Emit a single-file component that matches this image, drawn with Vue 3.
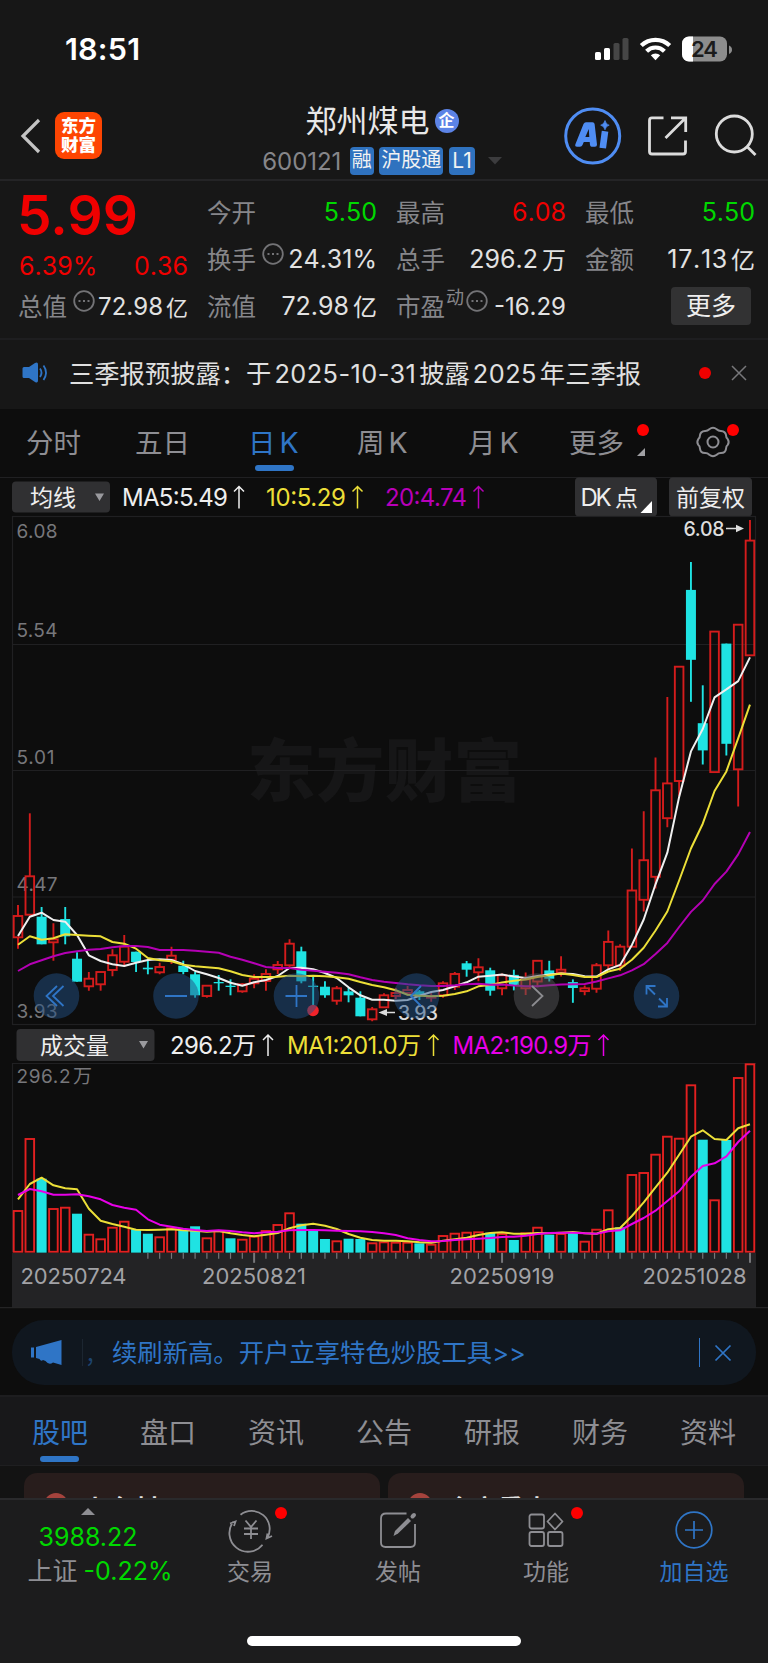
<script setup>
const STEP = 11.806
const X0 = 18
const xs = (i) => +(X0 + STEP * i).toFixed(2)

// Each candle: high, body top, body bottom, low (plot pixels), direction
const early = [
  [315, 348, 412, 446, 1], [40, 229, 344, 344, 1], [321, 350, 433, 433, 0], [370, 418, 427, 482, 1],
  [321, 357, 409, 433, 0], [457, 476, 545, 545, 0], [516, 536, 559, 572, 1], [516, 516, 553, 572, 1],
  [448, 466, 510, 529, 1], [405, 440, 485, 501, 1], [455, 455, 486, 516, 0], [482, 503, 508, 523, 0],
  [488, 501, 517, 523, 1], [440, 467, 479, 492, 1], [482, 497, 516, 523, 0], [516, 523, 586, 593, 0],
  [557, 557, 588, 593, 1], [525, 546, 550, 572, 0], [538, 557, 561, 586, 0], [550, 553, 574, 578, 1],
]
const middle = [
  [223, 236, 250, 265, 1], [208, 222, 243, 272, 1], [183, 195, 208, 222, 1], [118, 131, 196, 203, 1],
  [140, 154, 244, 250, 0], [228, 257, 261, 318, 0], [244, 260, 286, 293, 0], [258, 265, 302, 314, 1],
  [262, 274, 286, 307, 0], [274, 293, 349, 349, 0], [321, 328, 358, 364, 1], [280, 286, 322, 324, 1],
  [264, 279, 288, 298, 1], [258, 270, 279, 288, 1], [270, 274, 286, 300, 0], [278, 288, 293, 305, 1],
  [244, 250, 286, 293, 1], [216, 222, 260, 270, 1], [183, 190, 209, 230, 0], [175, 202, 217, 244, 1],
  [203, 211, 272, 287, 0],
]
const late = [
  [1375, 1380, 1418, 1438, 1], [1364, 1379, 1409, 1424, 0], [1372, 1392, 1418, 1437, 1], [1338, 1338, 1398, 1415, 1],
  [1338, 1366, 1390, 1398, 0], [1325, 1364, 1372, 1384, 1], [1392, 1400, 1417, 1460, 0], [1410, 1418, 1426, 1438, 1],
  [1344, 1351, 1419, 1431, 1], [1250, 1283, 1351, 1365, 1], [1290, 1297, 1352, 1368, 1], [1012, 1134, 1297, 1297, 1],
  [904, 1046, 1161, 1195, 1], [748, 843, 1094, 1128, 1], [572, 823, 924, 950, 1], [484, 484, 816, 860, 1],
  [180, 261, 464, 586, 0], [538, 648, 727, 768, 0], [382, 382, 790, 790, 1], [417, 417, 708, 742, 0],
  [362, 362, 782, 890, 1], [58, 118, 451, 451, 1],
]
const e = (v) => 800 + v / 3
const m = (v) => 900 + v / 3
const l = (v) => 500 + v / 2.9037
const r1 = (n) => +n.toFixed(1)
const scale = (rows, f) => rows.map((r) => [f(r[0]), f(r[1]), f(r[2]), f(r[3]), r[4]])
const candles = [...scale(early, e), ...scale(middle, m), ...scale(late, l)].map((c, i) => ({
  x: xs(i), hi: r1(c[0]), top: r1(c[1]), bot: r1(c[2]), lo: r1(c[3]), up: !!c[4],
}))

const line = (ys) => ys.map((y, i) => `${xs(i)},${r1(y)}`).join(' ')
const join3 = (a, b, c) => line([...a.map(e), ...b.map(m), ...c.map(l)])

const ma5 = join3(
  [408, 350, 338, 360, 365, 405, 466, 483, 493, 498, 488, 480, 478, 480, 493, 513, 523, 534, 548, 557],
  [247, 240, 228, 204, 203, 208, 219, 234, 262, 286, 299, 299, 302, 300, 287, 276, 270, 259, 247, 230, 227],
  [1378, 1384, 1388, 1382, 1378, 1375, 1376, 1383, 1384, 1363, 1350, 1292, 1218, 1116, 1024, 862, 730, 665, 573, 550, 526, 457],
)
const ma10 = join3(
  [434, 409, 419, 415, 403, 405, 407, 409, 426, 431, 446, 474, 481, 484, 494, 499, 502, 505, 514, 525],
  [231, 231, 230, 227, 229, 227, 229, 232, 236, 246, 255, 262, 271, 284, 287, 289, 287, 282, 274, 259, 255],
  [1401, 1396, 1392, 1385, 1380, 1375, 1379, 1385, 1385, 1369, 1361, 1335, 1300, 1250, 1195, 1105, 1012, 940, 845, 788, 692, 594],
)
const ma20 = join3(
  [513, 493, 481, 469, 459, 454, 449, 447, 442, 438, 438, 441, 450, 450, 450, 452, 455, 458, 470, 479],
  [190, 201, 204, 204, 209, 212, 215, 218, 223, 232, 240, 245, 249, 253, 256, 258, 258, 256, 253, 251, 254],
  [1407, 1410, 1412, 1412, 1409, 1407, 1406, 1405, 1398, 1389, 1380, 1366, 1348, 1318, 1286, 1240, 1196, 1163, 1115, 1079, 1029, 964],
)

const volTops = [
  573, 357, 476, 567, 563, 581, 644, 658, 623, 605, 628, 641, 652, 625, 630, 619, 655, 634, 655, 659, 650,
  633, 615, 580, 611, 632, 657, 664, 656, 657, 670, 667, 668, 668, 670, 674, 648, 641, 638, 637, 638, 642,
  660, 640, 623, 644, 642, 639, 665, 629, 571, 622, 465, 459, 404, 350, 356, 196, 359, 541, 360, 174, 133,
]
const volDown = new Set([2, 5, 10, 11, 14, 15, 18, 24, 25, 26, 28, 29, 34, 40, 42, 45, 47, 51, 58, 60])
const v = (n) => 1020 + n / 3
const bars = volTops.map((t, i) => ({ x: xs(i), y: r1(v(t)), up: !volDown.has(i) }))
const volMa1 = line([
  538, 492, 473, 496, 505, 508, 566, 602, 612, 620, 629, 630, 629, 628, 631, 632, 635, 633, 640, 645, 649,
  644, 639, 625, 616, 611, 617, 627, 642, 653, 660, 662, 662, 664, 667, 668, 662, 658, 653, 645, 639, 637,
  641, 641, 639, 640, 638, 636, 640, 641, 628, 624, 588, 547, 502, 458, 404, 350, 331, 357, 360, 325, 313,
].map(v))
const volMa2 = line([
  525, 507, 514, 524, 524, 523, 529, 538, 555, 563, 569, 598, 614, 620, 626, 630, 633, 631, 633, 637, 640,
  637, 635, 631, 630, 630, 631, 632, 633, 634, 636, 640, 645, 655, 660, 664, 663, 660, 658, 656, 654, 651,
  650, 647, 642, 639, 638, 638, 640, 641, 634, 631, 612, 594, 572, 543, 514, 470, 438, 430, 409, 366, 332,
].map(v))
const ticks = Array.from({ length: 52 }, (_, k) => k + 11).map((i) => ({ x: xs(i), h: [20, 41, 62].includes(i) ? 10 : 6 }))

const sections = ['股吧', '盘口', '资讯', '公告', '研报', '财务', '资料']
</script>

<template>
  <div class="page">
    <div class="status">
      <span class="time">18:51</span>
      <svg class="sysicons" width="140" height="30" viewBox="0 0 140 30">
        <rect x="0" y="16" width="6" height="8" rx="1.6" fill="#fff" />
        <rect x="9" y="12" width="6" height="12" rx="1.6" fill="#fff" />
        <rect x="18.500" y="7" width="6" height="17" rx="1.6" fill="#464646" />
        <rect x="27.500" y="2" width="6" height="22" rx="1.6" fill="#464646" />
        <g fill="none" stroke="#fff" stroke-width="4.200">
          <path d="M46.300 9.500 A20.500 20.500 0 0 1 74.700 9.500" />
          <path d="M51.600 15.200 A12.600 12.600 0 0 1 69.400 15.200" />
        </g>
        <path d="M60.500 24.200 L55.800 19.300 A6.800 6.800 0 0 1 65.200 19.300 Z" fill="#fff" />
        <path d="M134 9.500 q3 1.200 3 4.200 q0 3 -3 4.200 z" fill="#8d8d8d" />
        <rect x="87" y="0.500" width="45" height="25" rx="7" fill="#8d8d8d" />
        <path d="M98 0.500 H94 a7 7 0 0 0 -7 7 v11 a7 7 0 0 0 7 7 h4 z" fill="#fff" />
        <text x="109.500" y="21" text-anchor="middle" font-size="22" font-weight="600" fill="#1b1b1b" textLength="27">24</text>
      </svg>
    </div>

    <header class="head">
      <svg class="back" width="22" height="36" viewBox="0 0 22 36"><path d="M19 2 L3 18 L19 34" fill="none" stroke="#c4c4c4" stroke-width="3.200" /></svg>
      <div class="logo"><span>东方</span><span>财富</span></div>
      <div class="title">
        <div class="name"><span>郑州煤电</span><i>企</i></div>
        <div class="code">
          <span class="num">600121</span>
          <b>融</b><b>沪股通</b><b class="lv">L1</b>
          <svg width="14" height="8" viewBox="0 0 14 8"><path d="M0 0h14l-7 7.500z" fill="#3c3c3e" /></svg>
        </div>
      </div>
      <svg class="tools" width="204" height="60" viewBox="0 0 204 60">
        <g transform="translate(-556 -106)">
          <circle cx="592.700" cy="136" r="27" fill="none" stroke="#4f8df3" stroke-width="3" />
          <path fill="#4f8df3" fill-rule="evenodd" d="M575.300 144.500L583.500 124Q584.300 122.300 586 122.300H592.500Q594.300 122.300 594.600 124L597 144.500Q597 146.700 595 146.700H591.500Q590.300 146.700 590 145L589.700 142H583.800L582.500 145Q581.800 146.700 580 146.700H577Q574.800 146.700 575.300 144.500ZM585.300 137H589.300L588.800 129Z" />
          <path d="M604.600 134.500L603.200 144.800" fill="none" stroke="#4f8df3" stroke-width="6.600" stroke-linecap="square" />
          <path d="M605 120.500 q1 4 4.200 4.700 q-3.400 0.800 -4.200 4.600 q-0.900 -3.800 -4.300 -4.600 q3.300 -0.800 4.300 -4.700z" fill="#4f8df3" stroke="#4f8df3" stroke-width="0.700" />
          <g fill="none" stroke="#dcdcdc" stroke-width="2.800">
            <path d="M663.500 117.800 H652 q-2.500 0 -2.500 2.500 V151.500 q0 2.500 2.500 2.500 H683 q2.500 0 2.500 -2.500 V140.500" />
            <path d="M671 117.800 H685.700 V132 M685 118.500 L665.500 138" />
            <circle cx="734.300" cy="134" r="18" />
            <path d="M747 146.500 L755.500 155" />
          </g>
        </g>
      </svg>
    </header>

    <section class="quote">
      <div class="col c0">
        <div class="price">5.99</div>
        <div class="cell chg"><span class="up">6.39%</span><span class="up">0.36</span></div>
        <div class="cell third"><label>总值</label><svg class="dots" viewBox="0 0 22 22"><circle cx="11" cy="11" r="9.800" /><path d="M5.500 11h2M10 11h2M14.500 11h2" /></svg><span class="sm">72.98<em>亿</em></span></div>
      </div>
      <div class="col">
        <div class="cell"><label>今开</label><span class="dn">5.50</span></div>
        <div class="cell"><label>换手</label><svg class="dots" viewBox="0 0 22 22"><circle cx="11" cy="11" r="9.800" /><path d="M5.500 11h2M10 11h2M14.500 11h2" /></svg><span>24.31%</span></div>
        <div class="cell"><label>流值</label><span>72.98<em>亿</em></span></div>
      </div>
      <div class="col">
        <div class="cell"><label>最高</label><span class="up">6.08</span></div>
        <div class="cell"><label>总手</label><span>296.2<em>万</em></span></div>
        <div class="cell"><label>市盈<sup>动</sup></label><svg class="dots pe" viewBox="0 0 22 22"><circle cx="11" cy="11" r="9.800" /><path d="M5.500 11h2M10 11h2M14.500 11h2" /></svg><span class="sm">-16.29</span></div>
      </div>
      <div class="col">
        <div class="cell"><label>最低</label><span class="dn">5.50</span></div>
        <div class="cell"><label>金额</label><span class="amount">17.13<em>亿</em></span></div>
        <div class="cell"><button class="more">更多</button></div>
      </div>
    </section>

    <section class="notice">
      <svg width="26" height="22" viewBox="0 0 26 22">
        <path d="M0.500 6.500 q0 -1.500 1.500 -1.500 H7 L13 1 q3 -1.500 3 1.500 V18.500 q0 3 -3 1.500 L7 16 H2 q-1.500 0 -1.500 -1.500z" fill="#2f75c6" />
        <path d="M18 6.500 q3 4 0 8.500 M21.500 3.500 q5 7 0 14.500" fill="none" stroke="#2f75c6" stroke-width="1.800" />
      </svg>
      <p>三季报预披露：<span class="yu">于</span><u>2025-10-31</u>披露<u>2025</u>年三季报</p>
      <i class="dot"></i>
      <svg class="close" width="16" height="16" viewBox="0 0 16 16"><path d="M1 1L15 15M15 1L1 15" stroke="#77777a" stroke-width="1.500" /></svg>
    </section>

    <nav class="tabs">
      <span>分时</span><span>五日</span><span class="on">日<u>K</u></span><span>周<u>K</u></span><span>月<u>K</u></span>
      <span class="mr">更多<i class="badge"></i><svg width="8" height="8" viewBox="0 0 8 8"><path d="M8 0V8H0z" fill="#a0a0a4" /></svg></span>
      <span class="gear">
        <svg width="34" height="32" viewBox="0 0 34 32" fill="none" stroke="#8e8e93" stroke-width="2">
          <path d="M13.300 3.200 Q17 0.500 20.700 3.200 Q22.500 5 25 4.900 Q29.500 5.200 30 9.200 Q30 11.800 31.800 13.200 Q33.500 16 31.800 18.800 Q30 20.200 30 22.800 Q29.500 26.800 25 27.100 Q22.500 27 20.700 28.800 Q17 31.500 13.300 28.800 Q11.500 27 9 27.100 Q4.500 26.800 4 22.800 Q4 20.200 2.200 18.800 Q0.500 16 2.200 13.200 Q4 11.800 4 9.200 Q4.500 5.200 9 4.900 Q11.500 5 13.300 3.200Z" />
          <circle cx="17" cy="16" r="5.500" />
        </svg>
        <i class="badge"></i>
      </span>
    </nav>

    <svg class="chart" width="768" height="832" viewBox="0 477 768 832">
      <line x1="0" x2="768" y1="477.500" y2="477.500" stroke="#202022" />
      <g class="btn">
        <rect x="12" y="481.500" width="98" height="31" rx="4" />
        <rect x="575" y="477.500" width="82" height="39" rx="4" />
        <rect x="669" y="477.500" width="83" height="39" rx="4" />
        <rect x="16.500" y="1029" width="138" height="32" rx="4" />
      </g>
      <path d="M95 493.500h9l-4.500 7.500zM139 1041h9l-4.500 7.500z" fill="#9a9a9e" />
      <path d="M652 501V513H640.500z" fill="#fff" />
      <g font-size="23" fill="#eee">
        <text x="30" y="505.500" textLength="46">均线</text>
        <text x="580.500" y="505.500" textLength="31" font-size="24">DK</text><text x="615" y="505.500" font-size="23">点</text>
        <text x="676" y="505.500" textLength="69">前复权</text>
        <text x="40" y="1053.500" textLength="69">成交量</text>
      </g>
      <g font-size="24">
        <text x="122" y="505.800" textLength="106" fill="#eee">MA5:5.49</text>
        <text x="266" y="505.800" textLength="80" fill="#ecdf38">10:5.29</text>
        <text x="385" y="505.800" textLength="82" fill="#b800b8">20:4.74</text>
        <text x="170" y="1053.800" textLength="86" fill="#eee">296.2万</text>
        <text x="287" y="1053.800" textLength="134" fill="#ecdf38">MA1:201.0万</text>
        <text x="452.500" y="1053.800" textLength="139" fill="#e800e8">MA2:190.9万</text>
      </g>
      <g fill="none" stroke-width="1.500">
        <path d="M239 508.500V486.500M234 491.500L239 486.500L244 491.500M268 1056V1035M263 1040L268 1035L273 1040" stroke="#eee" />
        <path d="M357.500 508.500V486.500M352.500 491.500L357.500 486.500L362.500 491.500M433.500 1056V1035M428.500 1040L433.500 1035L438.500 1040" stroke="#ecdf38" />
        <path d="M478.500 508.500V486.500M473.500 491.500L478.500 486.500L483.500 491.500" stroke="#b800b8" />
        <path d="M603.500 1056V1035M598.500 1040L603.500 1035L608.500 1040" stroke="#e800e8" />
      </g>

      <text class="mark" x="247" y="796" textLength="275">东方财富</text>
      <g stroke="#202022" fill="none" stroke-width="1.200">
        <rect x="12.500" y="516.500" width="743" height="508" />
        <path d="M12 644.500H756M12 770.500H756M12 897H756" />
        <path d="M12.500 1252V1063.500H756" />
      </g>
      <g class="axis">
        <text x="16.500" y="537.500" textLength="41">6.08</text>
        <text x="16.500" y="637.200" textLength="41">5.54</text>
        <text x="16.500" y="764" textLength="38">5.01</text>
        <text x="16.500" y="890.700" textLength="41">4.47</text>
        <text x="16.500" y="1017.500" textLength="41">3.93</text>
        <text x="16.500" y="1083" textLength="54">296.2</text><text x="73" y="1083">万</text>
      </g>

      <g v-for="(c, i) in candles" :key="'c' + i">
        <template v-if="c.up">
          <path :d="`M${c.x} ${c.hi}V${c.top}M${c.x} ${c.bot}V${c.lo}`" stroke="#d41c1c" stroke-width="1.900" />
          <rect :x="c.x - 4.300" :y="c.top" width="8.600" :height="c.bot - c.top" fill="none" stroke="#d41c1c" stroke-width="1.900" />
        </template>
        <template v-else>
          <path :d="`M${c.x} ${c.hi}V${c.lo}`" stroke="#1fe3e3" stroke-width="1.900" />
          <rect :x="c.x - 5" :y="c.top" width="10" :height="c.bot - c.top" fill="#1fe3e3" />
        </template>
      </g>
      <g fill="none" stroke-width="2" stroke-linejoin="round">
        <polyline :points="ma5" stroke="#f0f0f0" />
        <polyline :points="ma10" stroke="#ecdf38" />
        <polyline :points="ma20" stroke="#b400b4" />
      </g>
      <g fill="#ddd" font-size="19.500" font-weight="500">
        <text x="683.500" y="535.500" textLength="41">6.08</text>
        <text x="398" y="1020" textLength="40">3.93</text>
      </g>
      <path d="M726 528.500H737M387 1012.500H395" stroke="#ddd" stroke-width="1.600" />
      <path d="M736 524.800L744 528.500L736 532.200zM387 1009L378.500 1012.500L387 1016z" fill="#ddd" />

      <circle cx="313" cy="1010.500" r="5.800" fill="#f0232a" />
      <g fill="#214f84" fill-opacity="0.500">
        <circle cx="56.500" cy="996" r="22.800" />
        <circle cx="176" cy="996" r="22.800" />
        <circle cx="296.500" cy="996" r="22.800" />
        <circle cx="416.500" cy="996" r="22.800" />
        <circle cx="656.500" cy="996" r="22.800" />
      </g>
      <circle cx="536.500" cy="996" r="22.800" fill="#55555a" fill-opacity="0.500" />
      <g fill="none" stroke="#2f75c6" stroke-width="1.800">
        <path d="M57 986L46.500 996L57 1006M63.500 986L53 996L63.500 1006" />
        <path d="M165 996H187M285.500 996H307M296.500 985V1007M421 986L411 996L421 1006" />
        <path d="M646.500 994.500V986H655.500M647 986.500L655 994.500M667 998V1006.500H658M667 1006.500L659 998.500" />
      </g>
      <path d="M532 986L542.500 996L532 1006" fill="none" stroke="#8c8c90" stroke-width="1.800" />

      <g v-for="(b, i) in bars" :key="'b' + i">
        <rect v-if="b.up" :x="b.x - 4.300" :y="b.y" width="8.600" :height="1251.800 - b.y" fill="none" stroke="#e32020" stroke-width="1.900" />
        <rect v-else :x="b.x - 5" :y="b.y" width="10" :height="1252.800 - b.y" fill="#1fe3e3" />
      </g>
      <g fill="none" stroke-width="2" stroke-linejoin="round">
        <polyline :points="volMa1" stroke="#ecdf38" />
        <polyline :points="volMa2" stroke="#e800e8" />
      </g>
      <rect x="12" y="1252.800" width="744" height="54.700" fill="#232325" />
      <line v-for="t in ticks" :key="t.x" :x1="t.x" :x2="t.x" y1="1252.800" :y2="1252.800 + t.h" stroke="#77777a" :stroke-width="t.h > 6 ? 2 : 1.200" />
      <g font-size="22" fill="#a2a2a6">
        <text x="20.500" y="1284" textLength="106">20250724</text>
        <text x="202" y="1284" textLength="104">20250821</text>
        <text x="449.500" y="1284" textLength="105">20250919</text>
        <text x="642.500" y="1284" textLength="104">20251028</text>
      </g>
      <line x1="0" x2="768" y1="1307.700" y2="1307.700" stroke="#2a2a2c" />
    </svg>

    <div class="promoWrap">
      <div class="promo">
        <svg width="32" height="26" viewBox="0 0 32 26" fill="#2f75c6"><path d="M0 7.500h3v10H0zM5 7L30.500 0V25L22 22.500Q18 25.500 14.500 21L12 20Q10 22 8.500 19L5 18z" /></svg>
        <i class="bar"></i><em>，</em>
        <p>续刷新高。开户立享特色炒股工具&gt;&gt;</p>
        <i class="sep"></i>
        <svg width="16" height="16" viewBox="0 0 16 16"><path d="M0.500 0.500L15.500 15.500M15.500 0.500L0.500 15.500" stroke="#2f75c6" stroke-width="1.700" /></svg>
      </div>
    </div>

    <nav class="subtabs">
      <span v-for="(s, i) in sections" :key="s" :class="{ on: i === 0 }">{{ s }}</span>
    </nav>

    <div class="cards">
      <div class="card"><i></i><b>小东村</b></div>
      <div class="card"><i></i><b class="wide">今立看点</b></div>
    </div>

    <footer class="dock">
      <div class="index">
        <svg width="14" height="7" viewBox="0 0 14 7"><path d="M7 0l7 7H0z" fill="#8e8e93" /></svg>
        <strong>3988.22</strong>
        <div><span>上证</span><strong>-0.22%</strong></div>
      </div>
      <div class="act">
        <svg width="44" height="40" viewBox="0 0 44 40" fill="none" stroke="#8e8e93" stroke-width="1.800">
          <path d="M12.500 4.800A18 18 0 0 1 39.500 27.500M34.500 34.800A18 18 0 0 1 5.500 11.500M2 13.500L7.500 11.500L6 16M44 26L38.500 28.500L39.500 23.500" />
          <path d="M17.500 10.500L23 17L28.500 10.500M23 17V29M16 18.500H30M16 24H30" />
        </svg>
        <span>交易</span><i class="badge"></i>
      </div>
      <div class="act">
        <svg width="44" height="40" viewBox="0 0 44 40" fill="none" stroke="#8e8e93" stroke-width="1.800">
          <path d="M30.500 3.500H10Q5 3.500 5 8.500V32.500Q5 37 9.500 37H34.500Q39 37 39 32.500V14" />
          <path d="M17.500 26L19 21L32 8L35 11L22 23.500Z" fill="#8e8e93" stroke="none" />
          <path d="M36.500 6.500L38 5" stroke-width="4" stroke-linecap="round" />
        </svg>
        <span>发帖</span>
      </div>
      <div class="act">
        <svg width="44" height="40" viewBox="0 0 44 40" fill="none" stroke="#8e8e93" stroke-width="1.800">
          <rect x="5.500" y="4.500" width="14.500" height="14" rx="2" /><rect x="5.500" y="22" width="14.500" height="14" rx="2" /><rect x="24" y="22" width="14.500" height="14" rx="2" />
          <path d="M31 3.500L38.500 11.500L31 19.500L23.500 11.500Z" stroke-linejoin="round" />
        </svg>
        <span>功能</span><i class="badge"></i>
      </div>
      <div class="act blue">
        <svg width="44" height="40" viewBox="0 0 44 40" fill="none" stroke="#2f75c6" stroke-width="1.700"><circle cx="22" cy="20" r="17.800" /><path d="M22 11V29M13 20H31" /></svg>
        <span>加自选</span>
      </div>
      <div class="home"></div>
    </footer>
  </div>
</template>

<style>
body { background: #0d0d0d; }
</style>

<style scoped>
.page {
  width: 768px; height: 1663px; overflow: hidden; display: flex; flex-direction: column;
  background: #0d0d0d; color: #e2e2e2; font-family: Inter, "Noto Sans CJK SC", sans-serif;
}
.page > * { flex: none; box-sizing: border-box; }
i, em { font-style: normal; }
u { text-decoration: none; }
svg { display: block; flex: none; overflow: visible; }
.status { height: 98px; background: #171717; display: flex; justify-content: space-between; padding: 36px 33px 0 65px; }
.time { font-size: 30.500px; line-height: 26px; font-weight: 600; color: #fff; letter-spacing: 0.200px; }
.head { height: 83px; background: #171717; border-bottom: 2px solid #242426; display: flex; align-items: flex-start; padding-left: 20px; }
.back { margin: 20px 13px 0 0; }
.logo {
  width: 47px; height: 47px; margin-top: 14px; border-radius: 9px; background: #fe4502; color: #fff;
  display: flex; flex-direction: column; align-items: center; justify-content: center;
  font-weight: 900; font-size: 17.500px; line-height: 18.500px;
}
.title { width: 454px; padding-left: 106px; box-sizing: border-box; display: flex; flex-direction: column; align-items: center; }
.name { display: flex; align-items: center; height: 44px; font-size: 31px; color: #e8e8e8; }
.name span { margin-top: -4px; }
.name i { width: 24px; height: 24px; margin: 1px 0 0 5px; border-radius: 50%; background: #5c83e6; color: #fff; font-size: 16px; line-height: 23px; font-weight: 700; text-align: center; }
.code { display: flex; align-items: center; margin-top: 5px; height: 28px; gap: 5.500px; }
.code .num { font-size: 24px; color: #86868a; margin-right: 3px; letter-spacing: -0.050px; }
.code b { height: 28px; line-height: 27px; padding: 0 2px; border-radius: 4px; background: #2f72bf; font-weight: 400; font-size: 20px; color: #f2f2f2; }
.code .lv { padding: 0 3.500px; font-size: 21px; }
.code svg { margin-left: 7px; }
.tools { margin-top: 8px; }
.quote { height: 159px; background: #171717; border-bottom: 2px solid #1e1e20; padding: 7px 13px 0 19px; display: flex; justify-content: space-between; }
.col { width: 169px; }
.cell { height: 47px; display: flex; align-items: center; font-size: 25px; }
.cell > span { margin-left: auto; white-space: nowrap; display: flex; align-items: center; font-kerning: none; }
.cell label { font-size: 24.500px; color: #86868a; display: flex; margin-left: -1px; }
.cell em { font-size: 24px; margin-left: 4px; }
.cell .sm { font-size: 24px; padding-top: 2px; }
.cell .sm em { font-size: 22px; margin-left: 3px; }
.cell .amount { letter-spacing: 0.700px; }
.cell .amount em { margin-left: 3px; letter-spacing: 0; }
.cell sup { font-size: 18px; line-height: 20px; margin-left: 1px; }
.dots { width: 22px; height: 22px; margin: -9px 0 0 6px; fill: none; stroke: #737376; stroke-width: 1.800; }
.dots.pe { margin-left: 2px; }
.col .up { color: #f00000; }
.col .dn { color: #00d800; }
.price { height: 54px; line-height: 54px; font-size: 55px; font-weight: 600; color: #f00000; letter-spacing: 0.100px; margin-left: -2px; }
.chg > span:first-child { margin-left: 0; }
.third { height: 32px; }
.more { margin: 0 4px 0 auto; width: 80px; height: 38px; border: 0; border-radius: 4px; background: #323233; color: #eee; font: 25px/34px Inter, "Noto Sans CJK SC", sans-serif; padding: 0; }
.notice { height: 69px; background: #171717; display: flex; align-items: center; padding: 0 21px 3px 22px; }
.notice p { margin: -3px 0 0 21px; font-size: 25.300px; white-space: nowrap; width: 610px; color: #e0e0e0; }
.notice u { margin: 0 3px; letter-spacing: 0.450px; }
.dot { width: 12px; height: 12px; border-radius: 50%; background: #f00000; margin-left: 20px; }
.close { margin-left: auto; }
.tabs { height: 68px; display: flex; font-size: 27.500px; line-height: 68px; color: #8e8e93; padding-left: 26px; }
.tabs > span { position: relative; flex: none; width: 109px; }
.tabs > span:nth-child(2) { width: 113px; }
.tabs > span:nth-child(4) { width: 111px; }
.tabs > span:nth-child(5) { width: 101px; }
.tabs > .mr { width: 126.500px; display: flex; }
.tabs > .gear { width: 60px; }
.tabs u { margin-left: 4px; font-size: 28.500px; }
.tabs .on { color: #2f75c6; }
.tabs .on::after { content: ""; position: absolute; left: 7px; bottom: 6px; width: 39px; height: 6px; border-radius: 3px; background: #2f75c6; }
.mr svg { margin: 39px 0 0 13px; }
.badge { position: absolute; width: 12px; height: 12px; border-radius: 50%; background: #f00; }
.mr .badge { left: 67.500px; top: 15px; }
.gear svg { margin-top: 17px; }
.gear .badge { left: 31.500px; top: 15px; }
.chart { height: 832px; }
.chart text { font-family: Inter, "Noto Sans CJK SC", sans-serif; }
.btn rect { fill: #303032; }
.mark { font-size: 68.500px; font-weight: 900; fill: #161617; }
.axis text { font-size: 19px; fill: #77777b; }
.promoWrap { height: 88px; padding: 11px 12px 0; border-bottom: 2px solid #1d1d1f; }
.promo { height: 65px; border-radius: 32px; background: #10171f; display: flex; align-items: center; padding: 0 25px 0 19px; color: #2f75c6; font-size: 25.350px; }
.promo p { margin: -4px auto 0 0; white-space: nowrap; }
.promo em { width: 27px; color: #1d446f; font-size: 22px; margin-left: 2px; }
.bar { width: 1px; height: 27px; background: #1c2631; margin: 0 0 0 19px; }
.sep { width: 1px; height: 29px; background: #2f75c6; margin-right: 15px; }
.subtabs { height: 69px; background: #18181a; display: flex; padding: 0 5px 0 6px; border-bottom: 1px solid #1f1f21; }
.subtabs span { position: relative; width: 108px; text-align: center; font-size: 28px; line-height: 73px; color: #8e8e93; }
.subtabs .on { color: #2f75c6; }
.subtabs .on::after { content: ""; position: absolute; left: 34px; bottom: 3px; width: 39px; height: 6px; border-radius: 3px; background: #2f75c6; }
.cards { height: 32px; background: #131313; padding: 7px 24px 0; display: flex; gap: 8px; overflow: hidden; }
.card { flex: 1; height: 80px; border-radius: 13px; background: #281d1c; display: flex; align-items: flex-start; box-sizing: border-box; padding: 20px; }
.card i { width: 24px; height: 24px; border-radius: 50%; background: #a5433d; }
.card b { font-size: 24px; line-height: 28px; font-weight: 700; margin: 2px 0 0 15px; letter-spacing: 2px; }
.dock { flex: 1; background: #1c1c1d; border-top: 2px solid #2a2a2c; position: relative; display: flex; padding-top: 10px; }
.index { width: 176px; display: flex; flex-direction: column; align-items: center; font-size: 25px; color: #8e8e93; }
.index svg { margin-top: -2px; }
.index strong { font-weight: 400; color: #00d800; font-size: 25px; line-height: 34px; }
.index > strong { margin-top: 5px; }
.index div { display: flex; gap: 6px; margin: 0 0 0 24px; line-height: 34px; }
.act { width: 148px; display: flex; flex-direction: column; align-items: center; font-size: 23px; color: #8e8e93; position: relative; }
.act span { margin-top: 8px; line-height: 28px; }
.act .badge { left: 98.500px; top: -3px; }
.blue { color: #2f75c6; }
.home { position: absolute; left: 247px; bottom: 17px; width: 274px; height: 10px; border-radius: 5px; background: #fff; }
</style>
